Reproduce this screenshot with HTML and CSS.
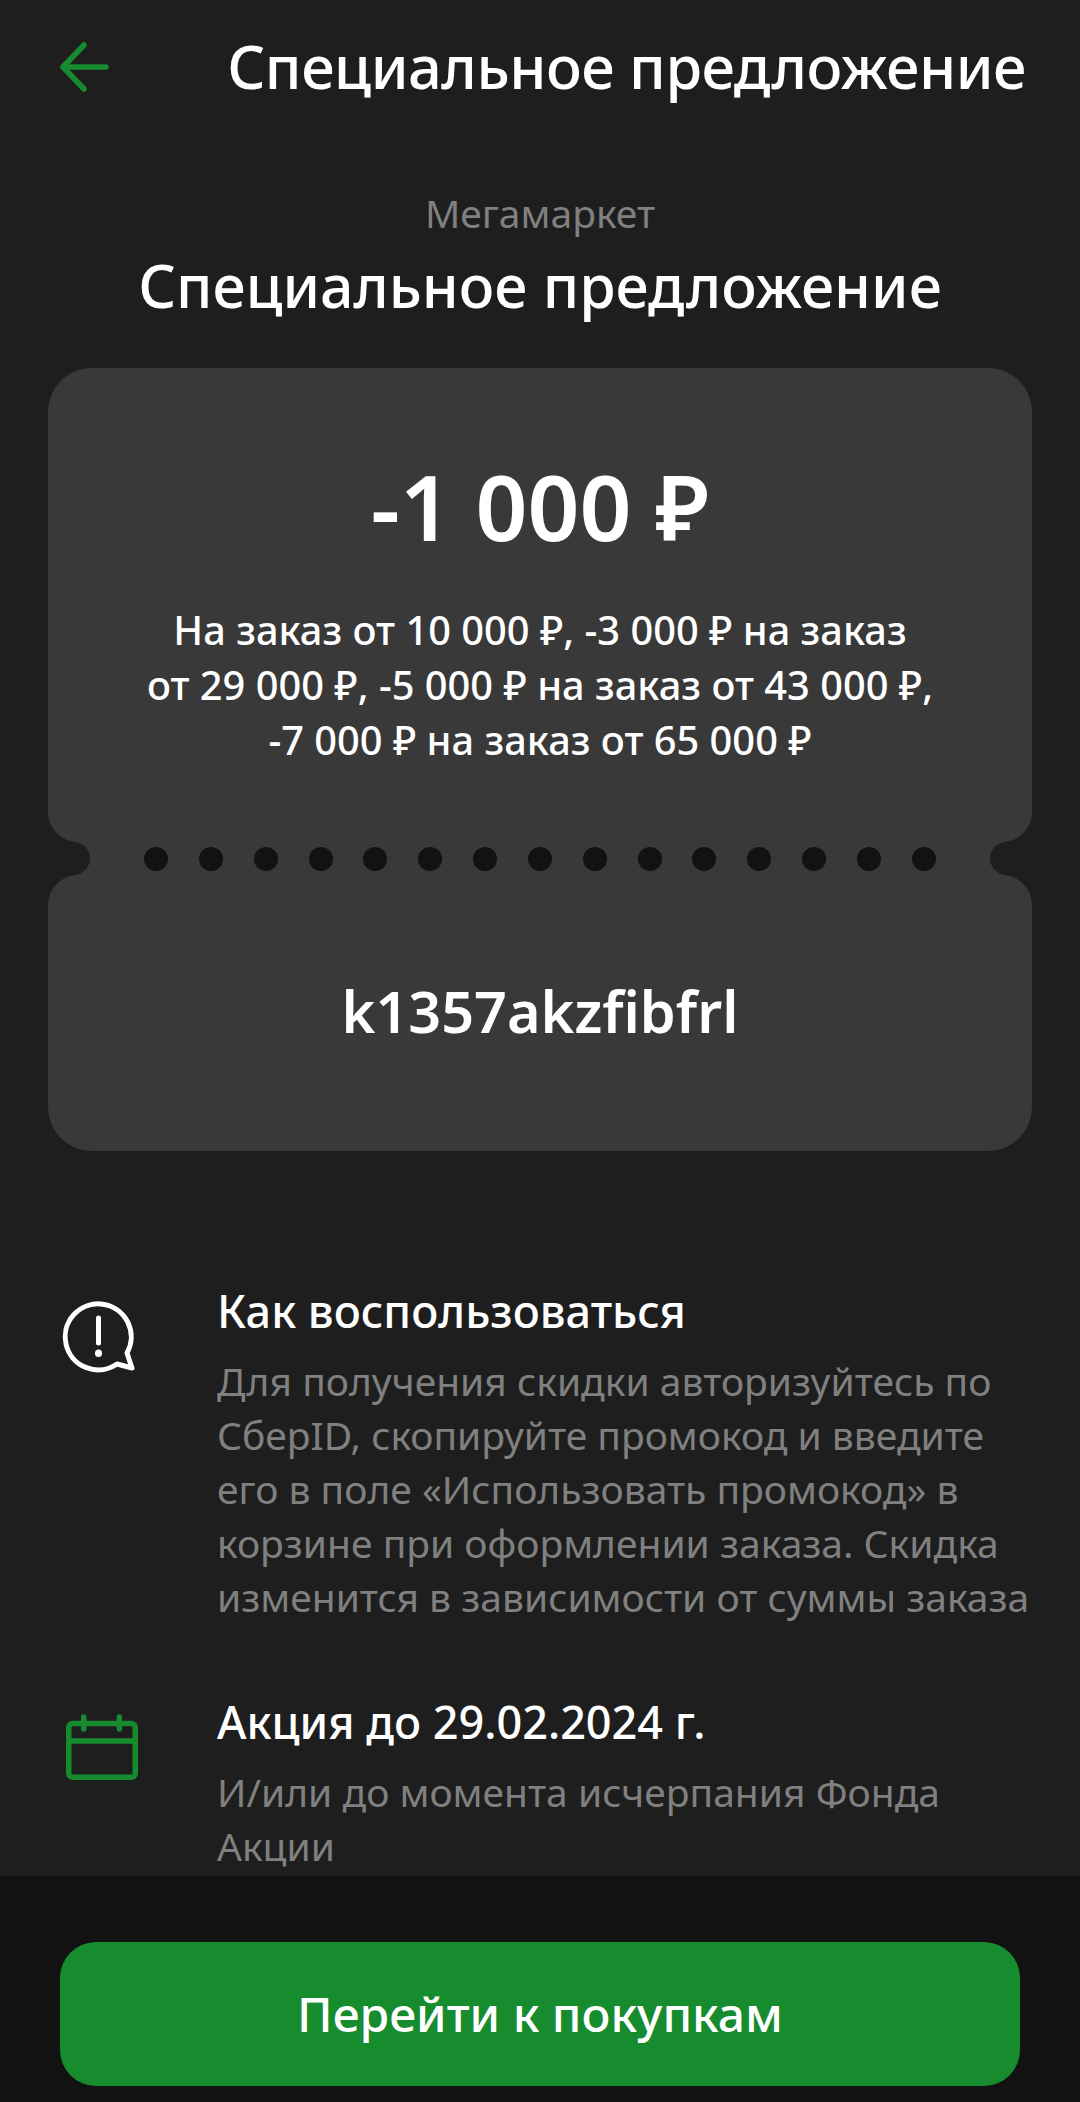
FILE: index.html
```html
<!DOCTYPE html>
<html lang="ru">
<head>
    <meta charset="UTF-8">
    <title>Специальное предложение</title>
    <link rel="stylesheet" href="styles.css">
</head>
<body>

<div class="page">
    <div class="content">
        <div class="header">
            <svg class="back" width="52" height="52" viewBox="0 0 52 52" fill="none" stroke="#178c2e" stroke-width="5.5" stroke-linecap="round" stroke-linejoin="round">
                <path d="M48 26H5"/>
                <path d="M26 4L5 26L26 48"/>
            </svg>
            <div class="header-title">Специальное предложение</div>
        </div>

        <div class="partner">Мегамаркет</div>
        <h1 class="offer-title">Специальное предложение</h1>

        <div class="ticket">
            <div class="ticket-top">
                <div class="amount">-1 000 ₽</div>
                <div class="terms">На заказ от 10 000 ₽, -3 000 ₽ на заказ<br>от 29 000 ₽, -5 000 ₽ на заказ от 43 000 ₽,<br>-7 000 ₽ на заказ от 65 000 ₽</div>
            </div>
            <div class="ticket-cut">
                <i></i><i></i><i></i><i></i><i></i><i></i><i></i><i></i>
                <i></i><i></i><i></i><i></i><i></i><i></i><i></i>
            </div>
            <div class="ticket-bottom">k1357akzfibfrl</div>
        </div>

        <div class="info">
            <svg class="info-icon" width="80" height="80" viewBox="0 0 80 80" fill="none" stroke="#fff" stroke-width="5" stroke-linecap="round" stroke-linejoin="round">
                <path d="M57 67A33 33 0 1 1 67 56L72 71Z"/>
                <path d="M38.500 21V46"/>
                <path d="M38.500 56V56.500" stroke-width="7"/>
            </svg>
            <div class="info-text">
                <div class="info-title">Как воспользоваться</div>
                <div class="info-desc">Для получения скидки авторизуйтесь по СберID, скопируйте промокод и введите его в поле «Использовать промокод» в корзине при оформлении заказа. Скидка изменится в зависимости от суммы заказа</div>
            </div>
        </div>

        <div class="info">
            <svg class="info-icon" width="80" height="80" viewBox="0 0 80 80" fill="none" stroke="#178c2e" stroke-width="5.500" stroke-linecap="round" stroke-linejoin="round">
                <rect x="8.750" y="15.500" width="66.500" height="53.750" rx="4"/>
                <path d="M8.750 33H75.250"/>
                <path d="M23.700 9V21"/>
                <path d="M59.300 9V21"/>
            </svg>
            <div class="info-text">
                <div class="info-title">Акция до 29.02.2024 г.</div>
                <div class="info-desc">И/или до момента исчерпания Фонда<br>Акции</div>
            </div>
        </div>
    </div>

    <div class="footer">
        <div class="btn">Перейти к покупкам</div>
    </div>
</div>

</body>
</html>
```

FILE: styles.css
```css
*{
    margin: 0;
    padding: 0;
    box-sizing: border-box;
}
html, body{
    width: 1080px;
    height: 2102px;
    overflow: hidden;
    background: #1e1e1e;
}
body{
    font-family: 'Noto Sans', 'Open Sans', sans-serif;
    color: #fff;
}
.page{
    height: 2102px;
    display: flex;
    flex-direction: column;
}
.content{
    flex: 1;
    min-height: 0;
    overflow: hidden;
}
.header{
    height: 134px;
    display: flex;
    align-items: center;
    justify-content: space-between;
    padding: 0 54px 0 58px;
}
.header-title{
    font-size: 59.5px;
    font-weight: 500;
    letter-spacing: -0.5px;
    margin-top: -3px;
}
.partner{
    margin-top: 56px;
    height: 46px;
    line-height: 46px;
    text-align: center;
    font-size: 39px;
    color: #808080;
}
.offer-title{
    margin-top: 10px;
    height: 78px;
    line-height: 78px;
    text-align: center;
    font-size: 59px;
    font-weight: 500;
}
.ticket{
    margin: 44px 48px 0;
}
.ticket-top{
    height: 474px;
    background: #393939;
    border-radius: 44px 44px 30px 30px;
    padding-top: 88px;
    text-align: center;
}
.amount{
    height: 100px;
    line-height: 100px;
    font-size: 91px;
    font-weight: 600;
}
.terms{
    margin-top: 46px;
    font-size: 39.8px;
    line-height: 55px;
    font-weight: 500;
}
.ticket-cut{
    position: relative;
    height: 33px;
    margin: 0 26px;
    background: #393939;
    display: flex;
    align-items: center;
    justify-content: space-between;
    padding: 0 70px;
}
.ticket-cut::before, .ticket-cut::after{
    content: '';
    position: absolute;
    top: 0;
    width: 33px;
    height: 33px;
    border-radius: 50%;
    background: #1e1e1e;
}
.ticket-cut::before{
    left: -17px;
}
.ticket-cut::after{
    right: -17px;
}
.ticket-cut i{
    width: 24px;
    height: 24px;
    border-radius: 50%;
    background: #121212;
}
.ticket-bottom{
    height: 276px;
    padding-bottom: 5px;
    background: #393939;
    border-radius: 30px 30px 44px 44px;
    display: flex;
    align-items: center;
    justify-content: center;
    font-size: 57.5px;
    font-weight: 600;
}
.info{
    display: flex;
    padding: 0 33px 0 60px;
}
.info + .info{
    margin-top: 71px;
}
.ticket + .info{
    margin-top: 133px;
}
.info-icon{
    flex: none;
    margin-top: 13px;
}
.info-text{
    margin-left: 77px;
}
.info-title{
    font-size: 45px;
    line-height: 54px;
    font-weight: 500;
}
.info-desc{
    margin-top: 16px;
    font-size: 39px;
    line-height: 54px;
    color: #808080;
}
.footer{
    flex: none;
    height: 226px;
    background: #121212;
    padding: 66px 60px 16px;
}
.btn{
    height: 144px;
    padding-bottom: 2px;
    border-radius: 36px;
    background: #178c2e;
    display: flex;
    align-items: center;
    justify-content: center;
    font-size: 48px;
    font-weight: 500;
}
```
